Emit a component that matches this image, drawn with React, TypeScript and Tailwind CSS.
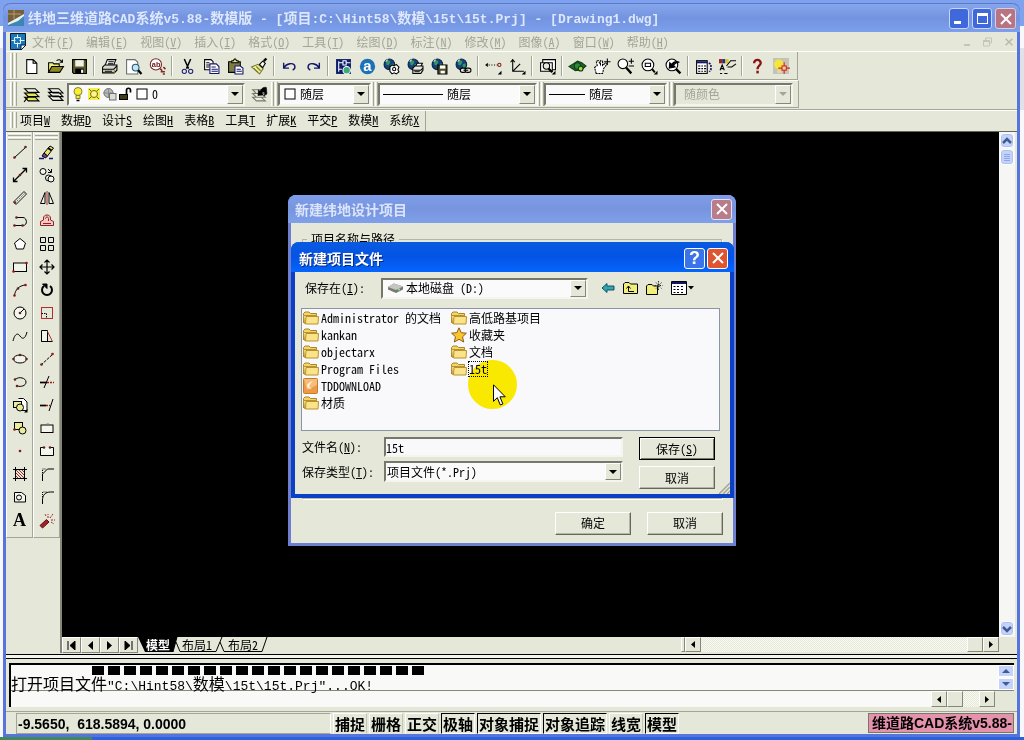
import React from "react";

type Kids = { children?: React.ReactNode };

const K = "#000";
const raised = "border border-t-white border-l-white border-r-[#85877a] border-b-[#85877a] bg-[#e5e8d8]";
const sunken = "border-2 border-t-[#77786c] border-l-[#77786c] border-r-[#f4f5ec] border-b-[#f4f5ec]";

function Svg({ children, s = 18 }: Kids & { s?: number }) {
  return (
    <svg width={s} height={s} viewBox="0 0 16 16" fill="none" stroke={K} strokeWidth="1" className="shrink-0 overflow-visible" aria-hidden="true">
      {children}
    </svg>
  );
}

const Globe = () => (
  <>
    <circle cx="6" cy="6" r="5" fill="#163f7c" stroke="#0c2148" />
    <path d="M3 3l3-1 1 2-2 3-2-1zM7 6l3-1v3l-2 2z" fill="#2f9a5b" stroke="none" />
    <path d="M2.500 3.500l2-2" stroke="#cfe4ff" />
  </>
);
const Corner = () => <path d="M15.500 12v3.500H12z" fill={K} stroke="none" />;
const Dot = ({ x, y, c = "#6b1f1f" }: { x: number; y: number; c?: string }) => (
  <circle cx={x} cy={y} r="1.300" fill={c} stroke="none" />
);

const icons: Record<string, React.ReactNode> = {
  new: <path d="M3.500 1.500h6l3.500 3.500v9.500h-9.500zM9.500 1.500v3.500h3.500" fill="#fff" />,
  open: (
    <>
      <path d="M1.500 13.500v-9h4l1 1h5v2.500" fill="#f3ef7a" />
      <path d="M1.500 13.500l3-5.500h11l-3.500 5.500z" fill="#8c8a1c" />
      <path d="M9 2.500c2-1.500 4-1 5 1.500M14.500 1.500V4h-2.500" />
    </>
  ),
  save: (
    <>
      <path d="M1.500 1.500h13v13h-12l-1-1z" fill="#5a5c2c" />
      <rect x="4" y="2" width="8" height="6" fill="#f0f0e6" stroke="none" />
      <rect x="4" y="10" width="8" height="4.500" fill="#000" stroke="none" />
      <rect x="9.500" y="11" width="2" height="3" fill="#fff" stroke="none" />
    </>
  ),
  print: (
    <>
      <path d="M4 6.500L6 1.500h8L12 6.500" fill="#fff" />
      <path d="M7 3.500h5M6.500 5.500h5" />
      <path d="M1.500 8.500l2-2h11.500v5l-2.500 2.500h-11z" fill="#d8d9cc" />
      <path d="M1.500 10.500h10.500l3-3M3.500 12.500h7" />
      <path d="M12.500 11v3" stroke="#888a20" />
    </>
  ),
  preview: (
    <>
      <path d="M1.500 1.500h8l2.500 2.500v11h-10.500z" fill="#fff" stroke="#67706c" />
      <circle cx="10" cy="9" r="3.200" fill="#bfe6f5" stroke="#2a5470" />
      <path d="M12.500 11.500l3 3.500" strokeWidth="2" />
    </>
  ),
  find: (
    <>
      <circle cx="6.500" cy="6" r="5.300" fill="#fff" stroke="#7c2a2a" />
      <text x="2.600" y="8.800" fontSize="7" fontWeight="700" fill="#6e1414" stroke="none" fontFamily="Liberation Sans, sans-serif">ab</text>
      <path d="M10.500 10l2 2M11 13h4M13 15h2M13.500 8.500l2 2" stroke="#7c2a2a" strokeWidth="1.500" />
    </>
  ),
  cut: (
    <>
      <path d="M5 1l4 9M11 1L7 10" strokeWidth="1.400" />
      <circle cx="5" cy="12.500" r="2" stroke="#20207a" />
      <circle cx="11" cy="12.500" r="2" stroke="#20207a" />
    </>
  ),
  copy: (
    <>
      <path d="M1.500 1.500h6l2 2v7.500h-8z" fill="#fff" />
      <path d="M3 4.500h3M3 6.500h4M3 8.500h3" />
      <path d="M6.500 5.500h6l2.500 2.500v6.500h-8.500z" fill="#fff" stroke="#14146a" />
      <path d="M8 8.500h4M8 10.500h6M8 12.500h6" stroke="#14146a" />
    </>
  ),
  paste: (
    <>
      <path d="M1.500 3.500h11v10h-11z" fill="#7d7c45" />
      <path d="M4.500 4.500v-2h1.500l1-1.500h1l1 1.500h1.500v2z" fill="#dfe08a" />
      <path d="M7.500 7.500h5l2.500 2v5.500H7.500z" fill="#fff" stroke="#14146a" />
      <path d="M9 10.500h4M9 12.500h5" stroke="#14146a" />
    </>
  ),
  brush: (
    <>
      <path d="M0.500 8.500l6-2.500 5 4-3.500 5z" fill="#eeee8c" stroke="#77783a" />
      <path d="M2.500 9.500l4 4M5 8l4 4" stroke="#77783a" />
      <path d="M8 6l3-3 2.500 2-2.500 4z" fill="#fff" />
      <path d="M12 3l2.500-2.500" strokeWidth="2.200" />
    </>
  ),
  undo: <path d="M2.500 4.500v5h5M3 9c2-4 9-5 10-1.500 .5 2-1 3.500-2 4" stroke="#15156c" strokeWidth="1.300" />,
  redo: <path d="M13.500 4.500v5h-5M13 9c-2-4-9-5-10-1.500-.5 2 1 3.500 2 4" stroke="#15156c" strokeWidth="1.300" />,
  design: (
    <>
      <rect x="1" y="1" width="14" height="14" fill="#0d1d6a" stroke="none" />
      <path d="M3.500 3v10M3 4.500h4M7.500 2.500h3v4h-3zM10.500 4.500h4M3.500 10.500h3" stroke="#fff" />
      <circle cx="11" cy="11.500" r="3.500" fill="#3ea878" stroke="#fff" />
    </>
  ),
  today: (
    <>
      <circle cx="8" cy="8" r="7.200" fill="#1b72b8" stroke="none" />
      <text x="8" y="11.800" textAnchor="middle" fontSize="14" fontWeight="700" fill="#fff" stroke="none" fontFamily="Liberation Sans, sans-serif">a</text>
    </>
  ),
  globe1: (
    <>
      <Globe />
      <path d="M6.500 8.500l2-2 2 1 2-1.500 2.500 2.500-1 2.500 1 2-2.500 2-2-1-2 1-2-2.500z" fill="#fff" />
      <circle cx="10.500" cy="10.500" r="1.500" />
    </>
  ),
  globe2: (
    <>
      <Globe />
      <path d="M8 8l1.500-3h5L13 8" fill="#fff" />
      <path d="M5.500 9.500l2-2H15v4l-2 3H5.500z" fill="#e8e8dc" />
      <path d="M6 11.500h7l2-2M7 13h5" />
    </>
  ),
  globe3: (
    <>
      <Globe />
      <path d="M6.500 6.500h8.500v8.500H6.500z" fill="#4e5028" />
      <rect x="8.500" y="7" width="5" height="3" fill="#fff" stroke="none" />
      <rect x="9" y="12" width="4" height="2.500" fill="#fff" stroke="none" />
    </>
  ),
  globe4: (
    <>
      <Globe />
      <rect x="5" y="9.500" width="5.500" height="4" rx="2" fill="#e8e8dc" />
      <rect x="9.500" y="9.500" width="5.500" height="4" rx="2" fill="#e8e8dc" />
      <path d="M8 11.500h4.500" />
    </>
  ),
  track: (
    <>
      <path d="M1 6.500h12" strokeDasharray="1 1.500" />
      <path d="M0.500 6.500l2-1.500v3z" fill={K} strokeWidth="0.500" />
      <circle cx="13.500" cy="6.500" r="1.500" stroke="#8c1c1c" />
      <Corner />
    </>
  ),
  ucs: (
    <>
      <path d="M3.500 2v10.500H14M3.500 12.500l7-7M1.500 4l2-2.500 2 2.500" />
      <Corner />
    </>
  ),
  distance: (
    <>
      <path d="M3.500 1.500h12v9.500h-12z" fill="#fff" />
      <path d="M1.500 4.500h11v8h-11z" fill="#fff" />
      <circle cx="7" cy="7.500" r="3" fill="#e5e8d8" />
      <path d="M9 10l3.500 3.500" strokeWidth="2" />
      <Corner />
    </>
  ),
  aerial: (
    <>
      <path d="M0 8l4-2.500 4-2.500 4 1.500 4 3-4 3.500-6 1z" fill="#1b6a2c" stroke="#143b18" />
      <circle cx="8" cy="7.500" r="3" fill="#2c8b3a" stroke="#143b18" />
      <circle cx="11" cy="10" r="2.200" fill="#a8d832" stroke="#143b18" />
    </>
  ),
  pan: (
    <>
      <path d="M3 14.500L1.500 9 4 7 3 3l2-.5 2 3.500V2.500L9 3v4l3-2.500 1 1.500-3 4-1 4.500z" fill="#fff" strokeDasharray="2 .7" />
      <path d="M13.500 0.500v6M10.500 3.500h6" />
    </>
  ),
  zoomrt: (
    <>
      <circle cx="5.500" cy="5.500" r="4.500" fill="#fff" />
      <path d="M8.500 9l5 5.500" strokeWidth="2.200" />
      <path d="M13.500 0.500v5M11 3h5M11 7.500h5" />
    </>
  ),
  zoomwin: (
    <>
      <circle cx="6.500" cy="6.500" r="5.500" fill="#fff" />
      <path d="M4 5h5v3H4z" />
      <path d="M10.500 10.500l2.500 3" strokeWidth="1.800" />
      <Corner />
    </>
  ),
  zoomprev: (
    <>
      <circle cx="6.500" cy="6.500" r="5.500" fill="#fff" />
      <path d="M10.500 10.500l4 4" strokeWidth="2.200" />
      <path d="M4 9.500l.5-5 1.500 1.500c2-2.500 4-3.500 7.500-2-3 0-4 .5-5.500 3l1.500 1.500z" fill={K} />
    </>
  ),
  props: (
    <>
      <rect x="1.500" y="2.500" width="10" height="12" fill="#fff" />
      <path d="M1.500 4h10" stroke="#15156c" strokeWidth="2" />
      <path d="M3 7.500h2M6 7.500h1.500M8.500 7.500h2M3 10h2M6 10h1.500M8.500 10h2M3 12.500h2M6 12.500h1.500M8.500 12.500h2" />
      <path d="M13 4.500l2 1.500v5l-1.500 2" stroke="#15156c" strokeDasharray="2 1" strokeWidth="1.500" />
    </>
  ),
  text: (
    <>
      <rect x="0" y="1" width="3" height="4" fill="#a02020" stroke="none" />
      <rect x="3" y="1" width="3" height="4" fill="#20307a" stroke="none" />
      <rect x="6" y="1" width="3" height="4" fill="#d8c82a" stroke="none" />
      <path d="M1 11.500l2-5 2 5M2 10h2.500M1 14.500h2M5 14.500h3" />
      <path d="M7 7.500l4-5h5M8 8.500h4l4-3" />
    </>
  ),
  help: (
    <>
      <path d="M4.800 5c0-4.500 6.500-4 6.200 0-.3 2-3 2.500-3 5.500" stroke="#8c1212" strokeWidth="2.200" />
      <rect x="6.900" y="12" width="2.300" height="2.500" fill="#8c1212" stroke="none" />
    </>
  ),
  assist: (
    <>
      <rect x="0" y="0" width="15" height="15" fill="#c3c3b8" stroke="none" />
      <circle cx="5.500" cy="6" r="4.500" fill="#f5e63c" stroke="none" />
      <path d="M4 11h4v3H4z" fill="#e8d890" stroke="none" />
      <path d="M10.500 4v11M5 9.500h11" stroke="#d02818" />
      <rect x="8.500" y="7.500" width="4" height="4" fill="#f8c8a0" stroke="#d02818" />
    </>
  ),
  layers: (
    <>
      <path d="M1.500 10.500h10l3.500 3.500H5zM1.500 6.500h10l3.500 3.500H5z" fill="#e4e858" />
      <path d="M1.500 2.500h10l3.500 3.500H5z" fill="#f4f4e8" />
      <path d="M1 15l4-5" />
    </>
  ),
  layers2: (
    <path d="M1.500 9.500h9.500l4 4H5.500zM1.500 6h9.500l4 4H5.500zM1.500 2.500h9.500l4 4H5.500z" fill="#f4f4e8" />
  ),
  layerprev: (
    <>
      <path d="M1.500 10.500h8l4 3.500H5zM1.500 7h8l4 3.500H5zM1.500 3.500h8l4 3.500H5z" fill="#ecede0" stroke="#77786c" />
      <path d="M6.500 9l.5-5.500L8.500 5c1-2.500 3.500-4.500 6-3.500l.5 6-3 2c2-3 1-5-2-3l1.500 2z" fill={K} strokeWidth="0.500" />
    </>
  ),
  bulb: (
    <>
      <circle cx="8" cy="5.500" r="4" fill="#f7ee3a" stroke="#86812c" />
      <path d="M6 9.500h4v3H6z" fill="#f7ee3a" stroke="#86812c" />
      <path d="M6.500 14.500h3" strokeWidth="1.500" />
    </>
  ),
  sun: (
    <>
      <rect x="2" y="2" width="12" height="12" fill="#f6ee4a" stroke="none" />
      <circle cx="8" cy="8" r="3.500" fill="#fff68a" stroke="#6d681a" />
      <path d="M3 3l2 2M11 11l2 2M13 3l-2 2M5 11l-2 2" stroke="#6d681a" />
    </>
  ),
  sunvp: (
    <>
      <circle cx="6.500" cy="7" r="4.500" fill="#b8baba" stroke="#6e7070" />
      <path d="M1 7h11M6.500 2v10" stroke="#8a8c8c" />
      <rect x="7.500" y="7.500" width="6.500" height="6.500" fill="#dcdcd8" stroke="#6e7070" />
    </>
  ),
  unlock: (
    <>
      <path d="M1 8h9v6H1z" fill={K} stroke="none" />
      <path d="M2 10h7M2 12h7" stroke="#b4ac40" strokeWidth="0.700" />
      <path d="M8.500 8V4.500c0-3 4-3 4 0v2" strokeWidth="1.700" />
    </>
  ),
  square: <rect x="3" y="3" width="10" height="10" fill="#fff" />,
  line: (<><path d="M2 14L14 3" /><Dot x={2.500} y={13.500} /><Dot x={13.500} y={3} /></>),
  ray: (<><path d="M2 14L14 2M1.500 10.500v4h4M14.500 5.500v-4h-4" strokeWidth="1.300" /><Dot x={8} y={8} /></>),
  mline: (<><path d="M1.500 12L12 1.500M4 14.500L14.500 4M1.500 12l2.500 2.500M12 1.500l2.500 2.500" strokeWidth="0.900" /><path d="M3 13L13 3" strokeWidth="0.600" strokeDasharray="1.500 1.500" /><Dot x={3} y={12.500} /></>),
  pline: (<><path d="M2 12.500h9c5 0 4-8 0-8H5" /><Dot x={2.500} y={12.500} /><Dot x={10.500} y={12.500} /><Dot x={4.500} y={4.500} /></>),
  polygon: <path d="M8 2.500l5.500 4.500-2 6h-7l-2-6z" fill="#fff" />,
  rect: (<><rect x="1.500" y="4" width="13" height="8.500" fill="#f1f2e8" /><Dot x={1.500} y={12.500} c="#9c1616" /><Dot x={14.500} y={4} c="#9c1616" /></>),
  arc: (<><path d="M2.500 13.500C3 8 7 3.500 13.500 3" /><Dot x={2.500} y={13.500} c="#9c1616" /><Dot x={6} y={6.500} /><Dot x={13.500} y={3} c="#9c1616" /></>),
  circle: (<><circle cx="8" cy="8" r="6" fill="#f4f5ec" /><path d="M8 8l4-4" /><Dot x={8} y={8} /></>),
  spline: <path d="M1 13C3 5 6 5 8 8s5 4 7-4" />,
  ellipse: (<><ellipse cx="8" cy="8" rx="6.500" ry="4" fill="#f1f2e8" /><Dot x={1.500} y={8} /><Dot x={14.500} y={8} /><Dot x={8} y={4} /></>),
  earc: (<><path d="M3 5.500C7 2 14 4 14 8s-5 5-9 4" /><Dot x={3} y={5.500} /><Dot x={5} y={12} /></>),
  insert: (<><path d="M6.500 1.500h5l3.500 3.500v8.500h-6" fill="#fff" /><rect x="1.500" y="4.500" width="8" height="6" fill="#eaec9a" /><circle cx="8" cy="10.500" r="3.500" fill="#eaec9a" /><Corner /></>),
  block: (<><rect x="2.500" y="2.500" width="8" height="7" fill="#eaec9a" /><circle cx="10.500" cy="10.500" r="3.500" fill="#eaec9a" /><Dot x={2.500} y={9.500} /></>),
  point: <Dot x={8} y={8} c="#7c1c1c" />,
  hatch: (<><path d="M4 4l8 8M7 4l5 5M10 4l2 2M4 7l5 5M4 10l2 2" stroke="#9a3030" /><path d="M3.500 1v14M12.500 1v14M1 3.500h14M1 12.500h14" /></>),
  region: (<><path d="M2.500 3.500h7l4 3v6.500h-11z" fill="#f4f5ec" /><circle cx="7" cy="8.500" r="2.500" /></>),
  erase: (<><path d="M5 9l6-7 3.500 2-6 8z" fill="#e8e46a" /><path d="M5 9l3.500 3-2 2-3.500-2z" fill="#7a3aa0" /><path d="M9 4l3.500 2.500" strokeWidth="2" /><path d="M0 14.500h5M10 14.500h4" stroke="#15156c" strokeWidth="1.500" /></>),
  dup: (<><circle cx="4" cy="4.500" r="3" fill="#f4f5ec" /><circle cx="9.500" cy="11" r="3" fill="#f4f5ec" /><circle cx="12" cy="12" r="3" fill="#f4f5ec" /><path d="M9 2l3 3M12.500 2v3.500H9" /></>),
  mirror: (<><path d="M6 2.500v11H1.500zM10 2.500v11h4.500z" fill="#f1f2e8" /><path d="M8 1v14" stroke="#9c2a2a" /></>),
  offset: (<><path d="M1.500 12.500v-4l3-1.500v-2c0-4 7-4 7 0v2l3 1.500v4z" fill="#f5c8c4" stroke="#8c2222" /><path d="M4 10.500h8M6.500 5.500c0-2 3-2 3 0v2.500" stroke="#8c2222" /></>),
  array: <path d="M1.500 1.500h5v5h-5zM9.500 1.500h5v5h-5zM1.500 9.500h5v5h-5zM9.500 9.500h5v5h-5z" />,
  move: <path d="M8 1v14M1 8h14M5.500 3.500L8 1l2.500 2.500M5.500 12.500L8 15l2.500-2.500M3.500 5.500L1 8l2.500 2.500M12.500 5.500L15 8l-2.500 2.500" strokeWidth="1.200" />,
  rotate: (<><path d="M5 4a5 5 0 1 0 6 0" strokeWidth="2" /><path d="M3.500 2h4.500v4.500z" fill={K} /></>),
  scale: (<><rect x="2.500" y="2.500" width="11" height="11" stroke="#b03030" /><path d="M2.500 8.500h5v5" strokeDasharray="1.500 1" /></>),
  stretch: (<><path d="M2.500 2.500h6v11h-6zM2.500 13.500h11" fill="#f1f2e8" /><path d="M8.500 3.500l5 10" stroke="#b03030" /></>),
  lengthen: (<><path d="M2 14L14 3" strokeDasharray="3 1" /><Dot x={2.500} y={13.500} /><Dot x={13.500} y={3} c="#9c1616" /></>),
  trim: (<><path d="M1 8.500h7" strokeWidth="1.700" /><path d="M8 8.500h7" stroke="#9c1616" strokeDasharray="2 1" strokeWidth="1.500" /><path d="M5 14L10 2" /></>),
  extend: (<><path d="M1 8.500h6" strokeWidth="1.700" /><path d="M7 8.500h4" stroke="#9c1616" strokeDasharray="2 1" strokeWidth="1.500" /><path d="M10 14l4-12" /></>),
  break1: (<><rect x="2" y="5" width="12" height="7.500" fill="#f4f5ec" /><rect x="7.500" y="3.500" width="2.500" height="2.500" fill="#777" stroke="none" /></>),
  break2: (<><path d="M4.500 4.500H1.500v8h13v-8h-3" fill="#f4f5ec" /><Dot x={5} y={4.500} /><Dot x={11} y={4.500} /></>),
  chamfer: (<><path d="M3.500 15V8l5-5H15" /><path d="M3.500 7V3h4" strokeDasharray="1 1" /></>),
  fillet: (<><path d="M3.500 15V11c0-5 3-8 8-8H15" /><path d="M3.500 8V3h5" strokeDasharray="1 1" /></>),
  explode: (<><path d="M1 13.500L7.500 7.500l2.500 2.500-6.500 6z" fill="#a02424" stroke="#5a1010" /><path d="M9 6V2M11 6l3-4M12 8h4M12 10l3 2M7 4L6 2" stroke="#9c2a2a" strokeDasharray="2 1" /></>),
};

const tbGroups: [string, string][][] = [
  [["new", "新建"], ["open", "打开"], ["save", "保存"]],
  [["print", "打印"], ["preview", "预览"], ["find", "查找"]],
  [["cut", "剪切"], ["copy", "复制"], ["paste", "粘贴"], ["brush", "特性匹配"]],
  [["undo", "放弃"], ["redo", "重做"]],
  [["design", "设计中心"], ["today", "今日"], ["globe1", "网上会议"], ["globe2", "网上发布"], ["globe3", "电子传递"], ["globe4", "超链接"]],
  [["track", "追踪"], ["ucs", "坐标系"]],
  [["distance", "距离"]],
  [["aerial", "鸟瞰视图"], ["pan", "平移"], ["zoomrt", "实时缩放"], ["zoomwin", "窗口缩放"], ["zoomprev", "上一个视图"]],
  [["props", "特性"], ["text", "文字"]],
  [["help", "帮助"], ["assist", "助手"]],
];

const drawTools = ["line", "ray", "mline", "pline", "polygon", "rect", "arc", "circle", "spline", "ellipse", "earc", "insert", "block", "point", "hatch", "region", "mtext"];
const modifyTools = ["erase", "dup", "mirror", "offset", "array", "move", "rotate", "scale", "stretch", "lengthen", "trim", "extend", "break1", "break2", "chamfer", "fillet", "explode"];

function Mixed({ text, latin }: { text: string; latin: string }) {
  return (
    <>
      {text.split(/([\u4e00-\u9fff]+)/).map((part, i) =>
        i % 2 ? <span key={i}>{part}</span> : <span key={i} className={latin}>{part}</span>,
      )}
    </>
  );
}

function Hot({ text, k, tail = "" }: { text: string; k: string; tail?: string }) {
  return (
    <>
      {text}(<u className="underline-offset-1">{k}</u>){tail}
    </>
  );
}

function Tri({ dir, c = K }: { dir: "up" | "down" | "left" | "right"; c?: string }) {
  const d = { up: "M0 6h8L4 2z", down: "M0 2h8L4 6z", left: "M6 0v8L2 4z", right: "M2 0v8l4-4z" }[dir];
  return (
    <svg width="8" height="8" viewBox="0 0 8 8" className="shrink-0" aria-hidden="true">
      <path d={d} fill={c} />
    </svg>
  );
}

function VGrip() {
  return (
    <span className="flex h-full shrink-0 gap-px py-px">
      <span className="w-[3px] border-l border-r border-l-white border-r-[#a3a596]" />
      <span className="w-[3px] border-l border-r border-l-white border-r-[#a3a596]" />
    </span>
  );
}

function Combo({ icon, value, label, size, disabled }: { icon?: React.ReactNode; value: string; label: string; size: string; disabled?: boolean }) {
  return (
    <div className={`relative flex items-center ${sunken} ${disabled ? "bg-[#e5e8d8]" : "bg-[#f9faf9]"} ${size}`}>
      {icon}
      <select aria-label={label} disabled={disabled} className={`h-full min-w-0 flex-1 appearance-none bg-transparent pl-1 outline-none ${disabled ? "text-[#a3a596]" : "text-black"}`}>
        <option>{value}</option>
      </select>
      <span className={`pointer-events-none flex h-full w-4 items-center justify-center ${raised}`}>
        <Tri dir="down" c={disabled ? "#a3a596" : K} />
      </span>
    </div>
  );
}

function Palette({ tools, label }: { tools: string[]; label: string }) {
  return (
    <div role="toolbar" aria-label={label} className="flex w-[27px] flex-col items-center border-r border-b border-[#a3a596] border-l border-l-white">
      <span className="mt-px flex w-[23px] flex-col gap-px">
        <span className="h-[3px] border-t border-b border-t-white border-b-[#a3a596]" />
        <span className="h-[3px] border-t border-b border-t-white border-b-[#a3a596]" />
      </span>
      {tools.map((t) => (
        <button key={t} type="button" aria-label={t} className="flex h-[23px] w-[23px] items-center justify-center">
          {t === "mtext" ? (
            <span className="font-['Liberation_Serif',serif] text-[18px] leading-[22px] font-bold">A</span>
          ) : (
            <Svg s={16}>{icons[t]}</Svg>
          )}
        </button>
      ))}
      <span className="h-1.5" />
    </div>
  );
}

function Cross({ s = 12, c = "#fff" }: { s?: number; c?: string }) {
  return (
    <svg width={s} height={s} viewBox="0 0 12 12" stroke={c} strokeWidth="2" aria-hidden="true">
      <path d="M1 1l10 10M11 1L1 11" />
    </svg>
  );
}

function XpScroll({ dir, size }: { dir: "up" | "down"; size: string }) {
  return (
    <button type="button" aria-label={dir} className={`flex items-center justify-center rounded-sm border border-white bg-[#c3d3fb] shadow-[inset_0_0_0_1px_#aebff0] ${size}`}>
      <svg width="10" height="8" viewBox="0 0 10 8" fill="none" stroke="#405c90" strokeWidth="2.500" aria-hidden="true">
        <path d={dir === "up" ? "M1 6l4-4 4 4" : "M1 2l4 4 4-4"} />
      </svg>
    </button>
  );
}

function SpinBtn({ dir }: { dir: "up" | "down" }) {
  return (
    <button type="button" aria-label={dir} className="flex h-3 items-center justify-center border border-white bg-[#c3d3fb]">
      <Tri dir={dir} c="#405c90" />
    </button>
  );
}

function PushButton({ children, isDefault }: Kids & { isDefault?: boolean }) {
  return (
    <button type="button" className={`h-[23px] w-[76px] bg-[#e5e8d8] text-center ${isDefault ? "border border-black shadow-[inset_1px_1px_#fff,inset_-1px_-1px_#77786c]" : "border border-t-white border-l-white border-r-[#66675c] border-b-[#66675c] shadow-[inset_-1px_-1px_#b5b7a6]"}`}>
      {children}
    </button>
  );
}

function Folder() {
  return (
    <svg width="16" height="14" viewBox="0 0 16 14" aria-hidden="true">
      <path d="M.5 12V2.500L2 1h4l1.500 1.500h6V5" fill="#f3d568" stroke="#a8842a" />
      <path d="M.5 4.500h13v8h-12z" fill="#fbe78f" stroke="#b8922e" />
      <path d="M2.500 13l.5-7.500h12.500l-.5 7.500z" fill="#fbe38a" stroke="#b8922e" />
    </svg>
  );
}
function Star() {
  return (
    <svg width="16" height="16" viewBox="0 0 16 16" aria-hidden="true">
      <path d="M8 .8l2.200 4.900 5.200.5-3.900 3.600 1.200 5.200L8 12.300 3.300 15l1.200-5.200L.6 6.200l5.200-.5z" fill="#f9c62e" stroke="#8c5a1a" />
    </svg>
  );
}
function Download() {
  return (
    <svg width="16" height="16" viewBox="0 0 16 16" aria-hidden="true">
      <rect x=".5" y=".5" width="14" height="15" rx="1" fill="#ee9a45" stroke="#c47a30" />
      <path d="M1 1h13v6L4 12z" fill="#f6bd78" />
      <path d="M10 3C6 4 4 6 4 8s3 3 5 3c-2-1-3-2-2.500-3.500S8 5 10 3z" fill="#fff3dc" />
    </svg>
  );
}

const files: { name: string; icon: React.ReactNode; focus?: boolean }[] = [
  { name: "Administrator 的文档", icon: <Folder /> },
  { name: "kankan", icon: <Folder /> },
  { name: "objectarx", icon: <Folder /> },
  { name: "Program Files", icon: <Folder /> },
  { name: "TDDOWNLOAD", icon: <Download /> },
  { name: "材质", icon: <Folder /> },
  { name: "高低路基项目", icon: <Folder /> },
  { name: "收藏夹", icon: <Star /> },
  { name: "文档", icon: <Folder /> },
  { name: "15t", icon: <Folder />, focus: true },
];

function ProjectDialog() {
  return (
    <section aria-label="新建纬地设计项目" className="absolute top-[195px] left-[288px] flex h-[351px] w-[448px] flex-col rounded-t-lg border-[3px] border-t-0 border-[#6e7fd0] bg-[#e5e8d8]">
      <header className="-mx-[3px] flex h-7 shrink-0 items-center justify-between rounded-t-lg bg-linear-to-b from-[#7f9ce8] via-[#7795df] to-[#80a0ea] pr-1 pl-[7px]">
        <h2 className="text-[14px] font-bold text-[#dbe4fa]">新建纬地设计项目</h2>
        <button type="button" aria-label="关闭" className="flex h-[21px] w-[21px] items-center justify-center rounded-[3px] border border-[#e4e4f4] bg-[#b87c8a]"><Cross /></button>
      </header>
      <fieldset className="mx-[11px] mt-2 flex-1 border border-[#b4b7ae] shadow-[1px_1px_#fff]">
        <legend className="ml-1 px-1">项目名称与路径</legend>
      </fieldset>
      <footer className="flex h-11 shrink-0 items-center justify-end gap-4 pt-1 pr-2.5">
        <PushButton>确定</PushButton>
        <PushButton>取消</PushButton>
      </footer>
    </section>
  );
}

function SaveDialog() {
  return (
    <section aria-label="新建项目文件" className="absolute top-[242px] left-[291px] flex w-[443px] flex-col rounded-t-lg border-4 border-t-0 border-[#0b3fc4] bg-[#e5e8d8]">
      <header className="-mx-1 flex h-[30px] items-center gap-0.5 rounded-t-lg bg-linear-to-b from-[#0a5ae0] via-[#0453e6] to-[#0565fc] pt-0.5 pr-1.5 pl-2">
        <h2 className="flex-1 text-[14px] font-bold text-white [text-shadow:1px_1px_#0a2a80]">新建项目文件</h2>
        <button type="button" aria-label="帮助" className="flex h-[21px] w-[21px] items-center justify-center rounded-[3px] border border-white bg-[#3b74e8] font-['Liberation_Sans',sans-serif] text-[18px] leading-4 font-bold text-white">?</button>
        <button type="button" aria-label="关闭" className="flex h-[21px] w-[21px] items-center justify-center rounded-[3px] border border-white bg-[#df5530]"><Cross /></button>
      </header>
      <div className="flex flex-col pr-2.5 pl-1.5">
        <div className="flex h-9 items-center pb-1">
          <span className="w-20 pl-1"><Hot text="保存在" k="I" tail=":" /></span>
          <Combo
            label="保存在"
            value="本地磁盘 (D:)"
            size="h-[21px] w-[207px] [&_select]:pl-0.5"
            icon={
              <svg width="17" height="12" viewBox="0 0 17 12" className="ml-1 shrink-0" aria-hidden="true">
                <path d="M1 5l6-3.500 9 3v3l-7 3.500-8-3.500z" fill="#777970" />
                <path d="M1 5l6-3.500 9 3-7 3.500z" fill="#c4c6c0" />
                <circle cx="12" cy="7.500" r="1" fill="#9fe89a" />
              </svg>
            }
          />
          <div className="ml-2.5 flex items-center gap-[3px]">
            <button type="button" aria-label="后退" className="flex w-5 justify-center"><svg width="14" height="12" viewBox="0 0 14 12"><path d="M1 6l5-4.500V4h7v4H6v2.500z" fill="#35a5a8" stroke="#14506c" /></svg></button>
            <button type="button" aria-label="向上" className="flex w-5 justify-center"><svg width="16" height="14" viewBox="0 0 16 14"><path d="M.5 12.500V3L2 1.500h4L7.500 3h7v9.500z" fill="#f2ee7a" stroke="#000" /><path d="M5.500 5v5.500H11M3.500 7.500l2-2.500 2 2.500" fill="none" stroke="#000" /></svg></button>
            <button type="button" aria-label="新建文件夹" className="flex w-5 justify-center"><svg width="17" height="14" viewBox="0 0 17 14"><path d="M.5 13.500V5L2 3.500h4L7.500 5h4v8.500z" fill="#f2ee7a" stroke="#000" /><path d="M12.500 0v9M8.500 4.500h8M10 1.500l5.500 6M15.500 1.500L10 7.500" stroke="#333" strokeDasharray="1.500 1" /></svg></button>
            <button type="button" aria-label="查看" className="ml-1 flex w-7 items-center gap-px"><svg width="16" height="14" viewBox="0 0 16 14"><path d="M.5.5h15v13H.5z" fill="#fff" stroke="#000" /><path d="M1 2h14" stroke="#14146a" strokeWidth="2" /><path d="M2.500 5.500h2M6 5.500h2M10 5.500h2M2.500 8.500h2M6 8.500h2M10 8.500h2M2.500 11.500h2M6 11.500h2M10 11.500h2" stroke="#000" /></svg><svg width="6" height="4" viewBox="0 0 6 4"><path d="M0 0h6L3 3.500z" /></svg></button>
          </div>
        </div>
        <ul className="grid h-[123px] grid-flow-col auto-cols-[148px] grid-rows-[repeat(6,17px)] border border-[#8b93a8] bg-[#f9f9fb] pl-px">
          {files.map((f) => (
            <li key={f.name} className="flex h-[17px] items-center gap-px">
              {f.icon}
              <span className={`px-px leading-4 whitespace-pre ${f.focus ? "outline-1 -outline-offset-1 outline-black outline-dotted" : ""}`}>{f.name}</span>
            </li>
          ))}
        </ul>
        <div className="flex justify-between pt-1.5 pr-[5px] pb-[5px]">
          <div className="flex flex-col gap-1">
            <div className="flex h-5 items-center">
              <label htmlFor="fname" className="w-[83px] pl-px"><Hot text="文件名" k="N" tail=":" /></label>
              <input id="fname" defaultValue="15t" className={`h-5 w-[239px] bg-[#f9f9fb] outline-none ${sunken}`} />
            </div>
            <div className="flex h-[21px] items-center">
              <span className="w-[83px] pl-px"><Hot text="保存类型" k="T" tail=":" /></span>
              <Combo label="保存类型" value="项目文件(*.Prj)" size="h-[21px] w-[239px] [&_select]:pl-px" />
            </div>
          </div>
          <div className="flex flex-col gap-1.5">
            <PushButton isDefault><Hot text="保存" k="S" /></PushButton>
            <PushButton>取消</PushButton>
          </div>
        </div>
      </div>
      <svg width="12" height="12" viewBox="0 0 12 12" className="absolute right-0 bottom-0" stroke="#a3a596" aria-hidden="true">
        <path d="M1 12L12 1M5 12l7-7M9 12l3-3" strokeWidth="1.500" />
      </svg>
    </section>
  );
}

function ClassicBtn({ dir }: { dir: "left" | "right" }) {
  return (
    <button type="button" aria-label={dir} className={`flex w-4 shrink-0 items-center justify-center ${raised}`}>
      <svg width="6" height="7" viewBox="0 0 6 7" aria-hidden="true"><path d={dir === "left" ? "M5 0v7L1 3.500z" : "M1 0v7l4-3.500z"} /></svg>
    </button>
  );
}

const menus: [string, string][] = [["文件", "F"], ["编辑", "E"], ["视图", "V"], ["插入", "I"], ["格式", "O"], ["工具", "T"], ["绘图", "D"], ["标注", "N"], ["修改", "M"], ["图像", "A"], ["窗口", "W"], ["帮助", "H"]];
const roadMenus: [string, string][] = [["项目", "W"], ["数据", "D"], ["设计", "S"], ["绘图", "H"], ["表格", "B"], ["工具", "T"], ["扩展", "K"], ["平交", "P"], ["数模", "M"], ["系统", "X"]];
const modes: [string, boolean][] = [["捕捉", false], ["栅格", false], ["正交", false], ["极轴", true], ["对象捕捉", true], ["对象追踪", true], ["线宽", false], ["模型", true]];
const dither = "bg-[repeating-conic-gradient(#f9faf4_0_25%,#e5e8d8_0_50%)] bg-[length:2px_2px]";

export default function App() {
  return (
    <div className="relative flex h-screen flex-col overflow-hidden bg-[linear-gradient(#7fa2ee_0_26px,#f6f8fb_26px_48px,#dfe2e6_48px_110px,#f6f8fb_110px)] pt-[3px] font-['Noto_Sans_CJK_SC',sans-serif] text-[12px] leading-4 text-black [font-feature-settings:'hwid']">
      <div className="mr-1 ml-[3px] flex min-h-0 flex-1 flex-col rounded-t-lg border-x-[3px] border-b-[3px] border-[#5674dc] bg-[#e5e8d8]">
        <header className="-mx-[3px] flex h-[29px] shrink-0 items-center rounded-t-lg border-t border-[#5a78cc] bg-linear-to-b from-[#86a6ec] via-[#7393e0] to-[#7da0ec] pr-1 pl-[5px]">
          <svg width="16" height="16" viewBox="0 0 16 16" aria-hidden="true">
            <path d="M0 0h16v16H0z" fill="#75603e" />
            <path d="M0 14l8-4 8-5v11H0z" fill="#3a86b4" />
            <path d="M0 13l9-5 7-4v2l-6 5-10 4z" fill="#e8f0f0" />
            <path d="M6 0v9M0 4h13" stroke="#b89a68" />
          </svg>
          <h1 className="ml-1 flex-1 text-[14px] font-bold whitespace-pre text-[#dde8fc]">
            <Mixed text={"纬地三维道路CAD系统v5.88-数模版 - [项目:C:\\Hint58\\数模\\15t\\15t.Prj] - [Drawing1.dwg]"} latin="font-['Liberation_Mono',monospace] text-[13px]" />
          </h1>
          <div className="flex gap-[3px] pt-px">
            <button type="button" aria-label="最小化" className="flex h-[21px] w-5 items-end rounded-[3px] border border-[#c8d6fa] bg-[#3f68dc] p-1"><span className="h-[3px] w-[7px] bg-white" /></button>
            <button type="button" aria-label="最大化" className="flex h-[21px] w-5 items-center justify-center rounded-[3px] border border-[#c8d6fa] bg-[#3f68dc]"><span className="h-[11px] w-[11px] border border-t-[3px] border-white" /></button>
            <button type="button" aria-label="关闭" className="flex h-[21px] w-[21px] items-center justify-center rounded-[3px] border border-[#d8cde4] bg-[#b87482]"><Cross /></button>
          </div>
        </header>

        <nav className="flex h-5 shrink-0 items-center border-b border-white pl-1 text-[#a3a596]">
          <svg width="16" height="17" viewBox="0 0 16 17" aria-hidden="true">
            <path d="M.5.5h15v12l-4 4H.5z" fill="#1b78b8" stroke="#081838" />
            <path d="M4.500 4.500h6v6h-6zM7.500 1.500v4M7.500 9.500v5M1.500 7.500h4M9.500 7.500h5" fill="none" stroke="#e4f4fc" />
            <path d="M11 12h5l-5 5z" fill="#fff" stroke="#081838" />
          </svg>
          {menus.map(([t, k]) => (
            <a key={k} href="#" className="px-1.5"><Hot text={t} k={k} /></a>
          ))}
          <span className="ml-auto flex items-center gap-3 pr-1 text-[#c3c5b6]">
            <svg width="8" height="10" viewBox="0 0 8 10" stroke="currentColor" strokeWidth="2"><path d="M1 8h6" /></svg>
            <svg width="10" height="10" viewBox="0 0 10 10" fill="none" stroke="currentColor"><path d="M2.500 3V1h6v5H7M.5 3.500h6V9h-6zM.5 4.500h6" /></svg>
            <Cross s={8} c="#b5b7a8" />
          </span>
        </nav>

        <div role="toolbar" aria-label="标准" className="flex h-7 w-[792px] shrink-0 items-center border-r border-b border-[#a3a596] pl-1">
          <VGrip />
          <span className="w-0.5" />
          {tbGroups.map((g, i) => (
            <React.Fragment key={i}>
              {i > 0 && <span className="mx-0.5 h-5 w-0.5 border-l border-r border-l-[#a3a596] border-r-white" />}
              {g.map(([id, label]) => (
                <button key={id} type="button" aria-label={label} className="flex w-6 items-center justify-center pt-px"><Svg s={17}>{icons[id]}</Svg></button>
              ))}
            </React.Fragment>
          ))}
        </div>

        <div className="flex h-[30px] shrink-0 border-b border-[#a3a596]">
          <div role="toolbar" aria-label="对象特性" className="mb-px flex w-[793px] items-center border-t border-r border-b border-t-white border-r-[#a3a596] border-b-[#a3a596] pl-1">
            <VGrip />
            <span className="w-0.5" />
            <button type="button" aria-label="图层" className="flex w-6 justify-center"><Svg s={17}>{icons.layers}</Svg></button>
            <button type="button" aria-label="图层状态" className="flex w-6 justify-center"><Svg s={17}>{icons.layers2}</Svg></button>
            <Combo label="图层" value="0" size="h-[23px] w-[178px] [&_select]:pl-0.5" icon={<span className="flex pl-px">{["bulb", "sun", "sunvp", "unlock", "square"].map((n) => <Svg key={n} s={16}>{icons[n]}</Svg>)}</span>} />
            <button type="button" aria-label="上一个图层" className="ml-0.5 flex w-6 justify-center"><Svg s={17}>{icons.layerprev}</Svg></button>
            <VGrip />
            <Combo label="颜色" value="随层" size="h-[23px] w-[93px] [&_select]:pl-0.5" icon={<span className="pl-0.5"><Svg s={16}>{icons.square}</Svg></span>} />
            <VGrip />
            <Combo label="线型" value="随层" size="h-[23px] w-[159px]" icon={<span className="ml-[3px] h-px w-[60px] bg-black" />} />
            <VGrip />
            <Combo label="线宽" value="随层" size="h-[23px] w-[123px]" icon={<span className="ml-[3px] h-px w-[36px] bg-black" />} />
            <VGrip />
            <Combo label="打印样式" value="随颜色" disabled size="h-[23px] w-[119px] [&_select]:pl-2" />
          </div>
        </div>

        <nav className="flex h-[21px] shrink-0 border-t border-white">
          <div className="flex items-center gap-[11px] border-r border-[#a3a596] pr-1.5 pb-0.5 pl-1">
            <span className="-mr-[11px] flex h-full w-2.5"><VGrip /></span>
            {roadMenus.map(([t, k]) => (
              <a key={k} href="#">{t}<u className="underline-offset-1">{k}</u></a>
            ))}
          </div>
        </nav>

        <div className="flex min-h-0 flex-1 border-t border-[#66675c]">
          <aside className="flex w-[56px] shrink-0 items-start border-r-2 border-[#85877a]">
            <Palette tools={drawTools} label="绘图" />
            <Palette tools={modifyTools} label="修改" />
          </aside>
          <div className="flex min-w-0 flex-1 flex-col">
            <div className="flex min-h-0 flex-1">
              <main className="flex-1 bg-black" />
              <div className="flex w-4 flex-col bg-[#f6f7f4] px-px py-px">
                <XpScroll dir="up" size="h-[15px]" />
                <span className="mt-px flex h-4 flex-col items-center justify-center gap-px rounded-sm border border-white bg-[#c3d3fb] shadow-[inset_0_0_0_1px_#aebff0]">
                  {[0, 1, 2, 3].map((n) => <i key={n} className="h-px w-1.5 bg-[#8ea6e0]" />)}
                </span>
                <span className="flex-1" />
                <XpScroll dir="down" size="h-[15px]" />
              </div>
              <span className="w-0.5" />
            </div>
            <div className="flex h-4 pr-[18px]">
              {[0, 1, 2, 3].map((n) => (
                <button key={n} type="button" aria-label={`tab-${n}`} className={`flex w-[19px] items-center justify-center ${raised}`}>
                  <svg width="9" height="9" viewBox="0 0 9 9" aria-hidden="true">
                    <path d={["M1 0v9M8 0v9L3 4.500z", "M7 0v9L2 4.500z", "M2 0v9l5-4.500z", "M1 0v9l5-4.500zM8 0v9"][n]} stroke={n % 3 ? "none" : K} strokeWidth="1" />
                  </svg>
                </button>
              ))}
              <div role="tablist" className="flex h-[15px] leading-[15px]">
                <svg width="7" height="15" viewBox="0 0 7 15"><path d="M0 0h7v15z" /></svg>
                <button role="tab" type="button" aria-selected="true" className="bg-black px-px font-bold text-white">模型</button>
                <svg width="10" height="15" viewBox="0 0 10 15" fill="none" stroke="#000"><path d="M0 0h6L2 15H0z" fill="#000" /><path d="M5 5l4 9.500h1" /></svg>
                <button role="tab" type="button" className="border-b border-black px-px">布局1</button>
                <svg width="14" height="15" viewBox="0 0 14 15" fill="none" stroke="#000"><path d="M0 14.500h3L9 0M7 5l4 9.500h3" /></svg>
                <button role="tab" type="button" className="border-b border-black px-px">布局2</button>
                <svg width="9" height="15" viewBox="0 0 9 15" fill="none" stroke="#000"><path d="M0 14.500h3L8 0" /></svg>
              </div>
              <span className="flex-1" />
              <div className="flex h-[15px] w-[318px]">
                <span className={`w-1 ${raised}`} />
                <ClassicBtn dir="left" />
                <span className={`flex-1 ${dither}`} />
                <span className={`w-4 ${raised}`} />
                <ClassicBtn dir="right" />
              </div>
            </div>
          </div>
        </div>

        <div className="flex shrink-0 flex-col pt-px">
          <span className="h-[5px] border-t border-b border-t-black border-b-black bg-[#f4f5ee]" />
          <div className="mx-[3px] mt-1 border-t-2 border-l-2 border-black bg-[#f9faf8]">
            <div className="flex h-[26px] border-b border-[#85877a]">
              <div className="flex-1">
                <div className="flex h-[11px] items-start gap-1 pt-px pl-[81px]">
                  {Array.from({ length: 21 }, (_, n) => <i key={n} className="h-[9px] w-3 bg-black" />)}
                </div>
                <p className="text-[16px] leading-[14px] whitespace-pre">
                  <Mixed text={'打开项目文件"C:\\Hint58\\数模\\15t\\15t.Prj"...OK!'} latin="font-['Liberation_Mono',monospace] text-[13px]" />
                </p>
              </div>
              <div className="flex w-4 flex-col gap-px">
                <SpinBtn dir="up" />
                <SpinBtn dir="down" />
              </div>
            </div>
            <div className="flex h-4">
              <input aria-label="命令" className="min-w-0 flex-1 bg-transparent px-0.5 outline-none" />
              <ClassicBtn dir="left" />
              <span className={`w-4 ${raised}`} />
              <span className={`w-4 ${dither}`} />
              <ClassicBtn dir="right" />
              <span className="w-[19px] bg-[#e5e8d8]" />
            </div>
          </div>
          <span className="mt-[3px] h-0.5 border-b border-[#a3a596]" />
        </div>

        <footer className="flex h-[22px] shrink-0 items-stretch gap-0.5 overflow-hidden pt-px pr-[3px] pl-2.5 font-bold">
          <output className="w-[315px] border border-[#a3a596] border-r-white pl-px font-['Liberation_Sans',sans-serif] text-[14px] leading-5 whitespace-pre">-9.5650,  618.5894, 0.0000</output>
          {modes.map(([m, on]) => (
            <button key={m} type="button" aria-pressed={on} className={`border px-px text-[15px] leading-5 whitespace-nowrap ${on ? "border-t-black border-r-white border-b-white border-l-black" : "border-t-white border-r-[#c3c5b6] border-b-transparent border-l-white"}`}>{m}</button>
          ))}
          <p className="mb-px ml-auto border border-[#77786c] bg-[#e592ac] pr-px pl-[3px] font-['Liberation_Sans','Noto_Sans_CJK_SC',sans-serif] text-[14px] leading-[18px] whitespace-nowrap">维道路CAD系统v5.88-</p>
        </footer>
      </div>
      <div className="flex h-[3px] shrink-0"><span className="w-[92px] bg-[#3f8a58]" /><span className="flex-1 bg-[#2c62dc]" /></div>

      <ProjectDialog />
      <SaveDialog />
      <span className="absolute top-[360px] left-[468px] h-[49px] w-[49px] rounded-full bg-[#ffee00] mix-blend-multiply" />
      <svg width="13" height="22" viewBox="0 0 13 22" className="absolute top-[384px] left-[493px]" aria-hidden="true">
        <path d="M.5.8v16.500l3.800-3.600 3 7.300 2.600-1.100-3-7.100h5.400z" fill="#fff" stroke="#000" />
      </svg>
    </div>
  );
}
